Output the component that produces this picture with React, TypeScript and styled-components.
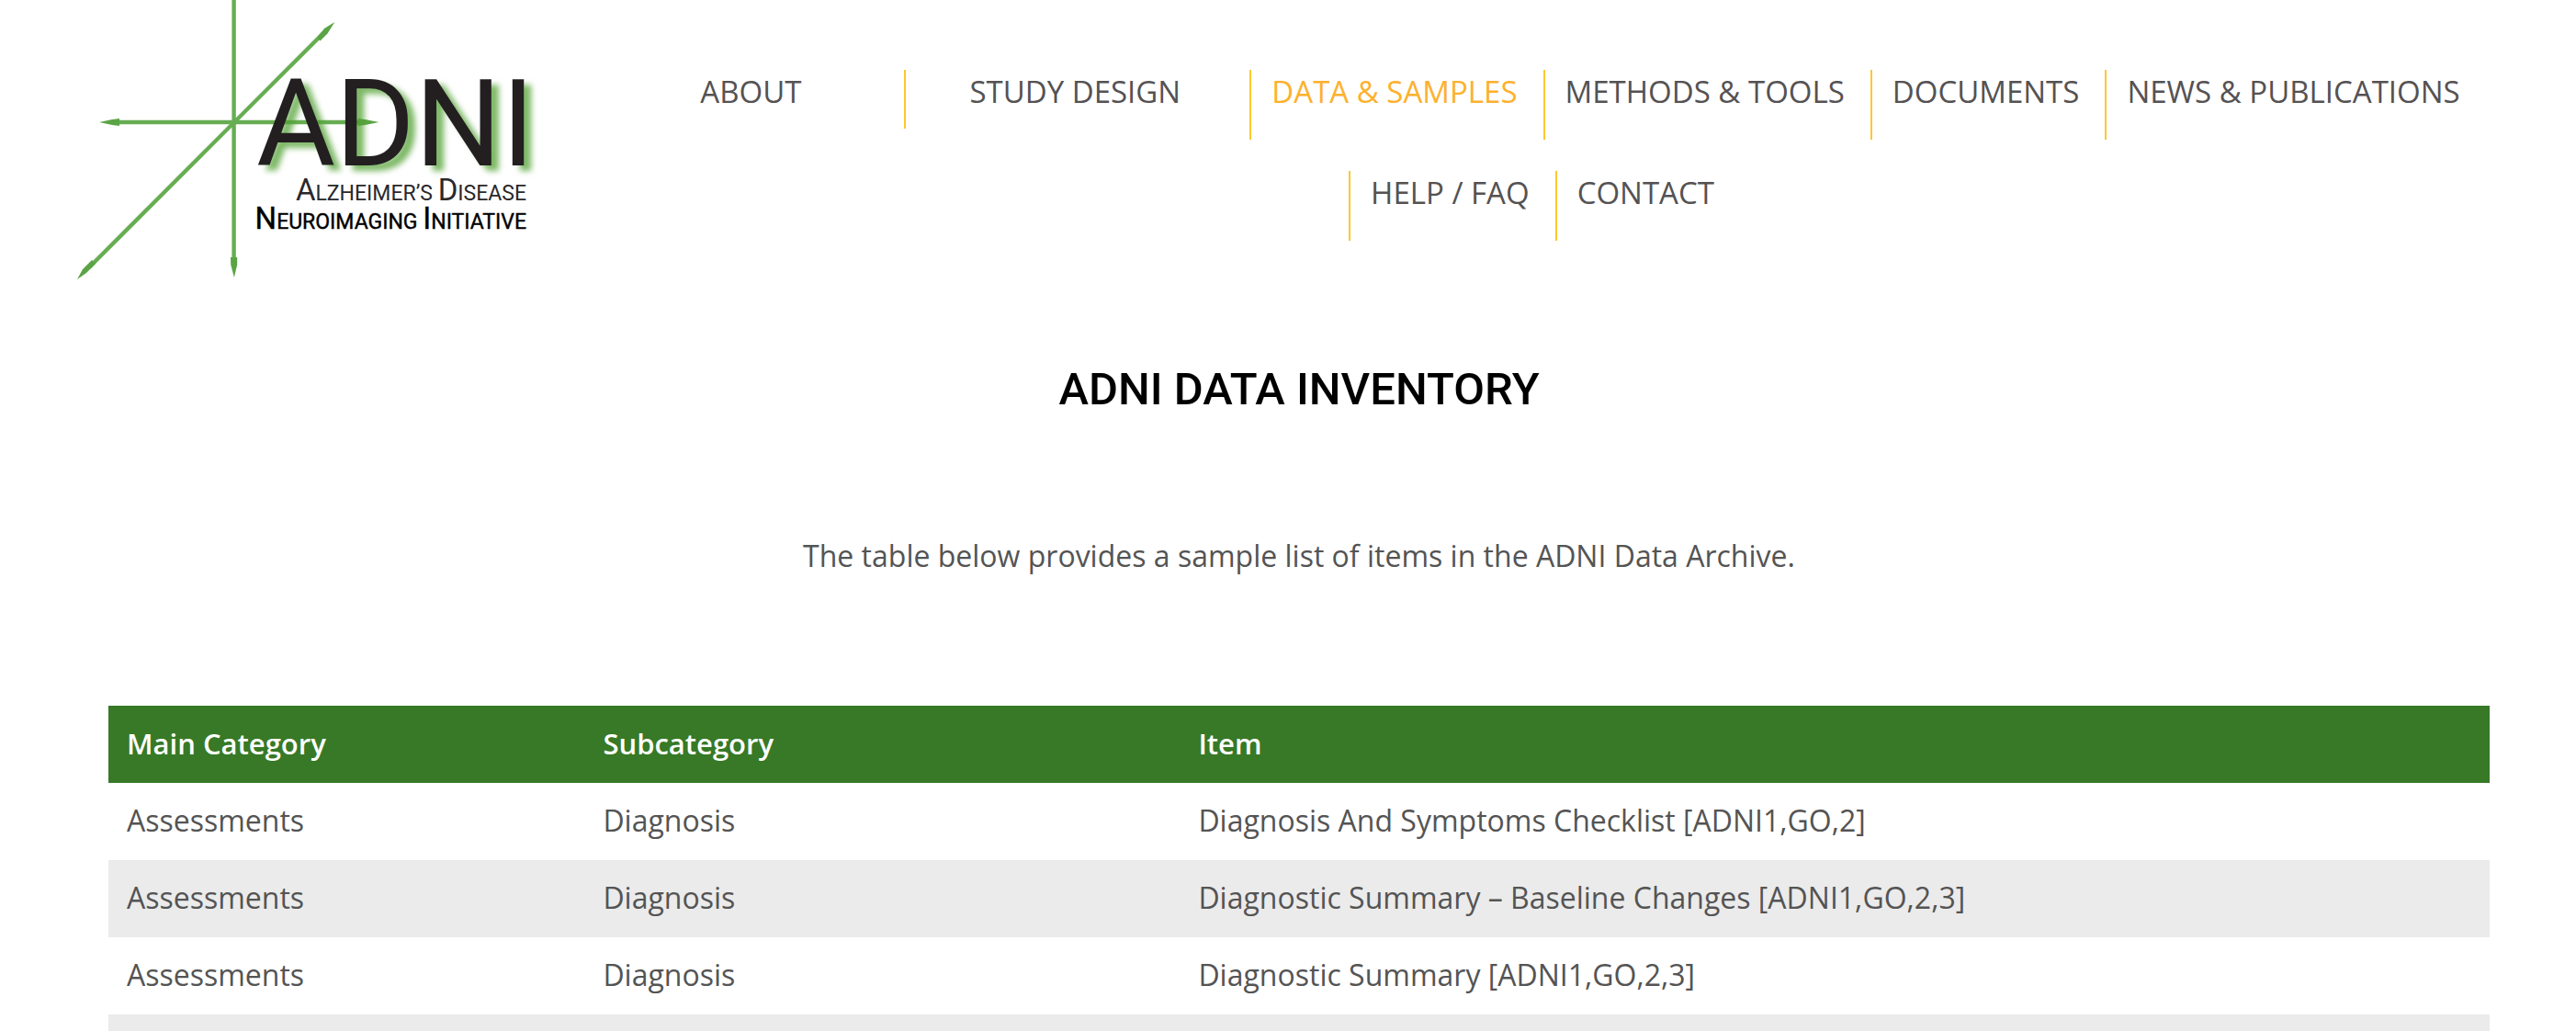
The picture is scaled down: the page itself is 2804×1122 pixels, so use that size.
import React from "react";
import styled, { createGlobalStyle, css } from "styled-components";

const GlobalStyle = createGlobalStyle`
  *, *::before, *::after { box-sizing: border-box; }
  body {
    margin: 0;
    background: #fff;
    color: #545454;
    font-family: "Open Sans", "Noto Sans", sans-serif;
    font-size: 32px;
    line-height: 48px;
  }
`;

const Header = styled.header`
  display: flex;
  align-items: flex-start;
  padding: 0 32px 0 80px;
`;

const LogoLink = styled.a`
  flex: none;
  display: block;
  width: 510px;
  svg { display: block; width: 100%; height: auto; }
`;

const Nav = styled.nav`
  flex: 1;
  min-width: 0;
  padding-top: 76px;
`;

const NavList = styled.ul`
  display: flex;
  flex-wrap: wrap;
  justify-content: center;
  align-items: flex-start;
  row-gap: 34px;
  margin: 0;
  padding: 0;
  list-style: none;
`;

const NavItem = styled.li<{ $divider: boolean; $short?: boolean; $minWidth?: number }>`
  padding: 0 28px ${(p) => (p.$short ? 16 : 28)}px 22px;
  text-align: center;
  ${(p) => p.$divider && css`border-left: 2px solid #fdc82f;`}
  ${(p) => p.$minWidth && css`min-width: ${p.$minWidth}px;`}
`;

const NavLink = styled.a<{ $active?: boolean }>`
  display: block;
  font-size: 33px;
  line-height: 48px;
  white-space: nowrap;
  text-decoration: none;
  color: ${(p) => (p.$active ? "#fdb12d" : "#555253")};
`;

const Main = styled.main`
  padding: 90px 94px 0 118px;
`;

const Title = styled.h1`
  margin: 0 0 127px;
  font-family: Roboto, sans-serif;
  font-size: 49px;
  font-weight: 500;
  line-height: 60px;
  text-align: center;
  color: #000;
`;

const Intro = styled.p`
  margin: 0 0 139px;
  text-align: center;
`;

const TableClip = styled.div`
  max-height: calc(100vh - 768px);
  overflow: hidden;
`;

const Table = styled.table`
  width: 100%;
  table-layout: fixed;
  border-collapse: collapse;
`;

const HeadCell = styled.th<{ $width: string }>`
  width: ${(p) => p.$width};
  padding: 17px 20px 19px;
  background: #377926;
  color: #fff;
  font-size: 31px;
  font-weight: 600;
  text-align: left;
`;

const Row = styled.tr`
  &:nth-child(even) { background: #ebebeb; }
`;

const Cell = styled.td`
  height: 84px;
  padding: 17px 20px 19px;
`;

type NavEntry = { label: string; divider: boolean; active?: boolean; short?: boolean; minWidth?: number };

const navEntries: NavEntry[] = [
  { label: "ABOUT", divider: false, minWidth: 328 },
  { label: "STUDY DESIGN", divider: true, short: true, minWidth: 376 },
  { label: "DATA & SAMPLES", divider: true, active: true },
  { label: "METHODS & TOOLS", divider: true },
  { label: "DOCUMENTS", divider: true },
  { label: "NEWS & PUBLICATIONS", divider: true },
  { label: "HELP / FAQ", divider: true },
  { label: "CONTACT", divider: true },
];

const columns = [
  { label: "Main Category", width: "20%" },
  { label: "Subcategory", width: "25%" },
  { label: "Item", width: "55%" },
];

const rows = [
  ["Assessments", "Diagnosis", "Diagnosis And Symptoms Checklist [ADNI1,GO,2]"],
  ["Assessments", "Diagnosis", "Diagnostic Summary – Baseline Changes [ADNI1,GO,2,3]"],
  ["Assessments", "Diagnosis", "Diagnostic Summary [ADNI1,GO,2,3]"],
  ["", "", ""],
];

const WordMark = styled.text`
  font-family: Roboto, sans-serif;
  font-size: 132px;
  font-weight: 400;
  fill: #231f20;
  filter: drop-shadow(8px 6px 3px rgba(80, 160, 50, 0.75));
`;

const Tagline = styled.text<{ $strong?: boolean }>`
  font-family: Roboto, sans-serif;
  font-size: 23px;
  fill: ${(p) => (p.$strong ? "#000" : "#2b282a")};
  stroke: ${(p) => (p.$strong ? "#000" : "none")};
  stroke-width: 0.4;
`;

const Cap = styled.tspan`
  font-size: 33px;
`;

function Logo() {
  return (
    <svg viewBox="0 0 510 304" role="img" aria-label="ADNI">
      <g stroke="#67ad53" strokeWidth="4.4" fill="none">
        <path d="M174.600 0V285" />
        <path d="M45 133H316" />
        <path d="M17 291L272 36" />
      </g>
      <g fill="#5ba446">
        <path d="M171 280h7.200v8L174.900 302l-3.700-14z" />
        <path d="M28 133L42 130l8-1v8l-8-1z" />
        <path d="M332.500 133l-15-3-8-1v8l8-1z" />
        <path d="M284.300 24L273 31l-8 10 3.500 3.500 8-8z" />
        <path d="M4 304L10 293l10-10 4 4-10 10z" />
      </g>
      <WordMark x="199" y="180">ADNI</WordMark>
      <Tagline x="493" y="218" textAnchor="end">
        <Cap>A</Cap>LZHEIMER’S <Cap>D</Cap>ISEASE
      </Tagline>
      <Tagline x="493" y="249" textAnchor="end" $strong>
        <Cap>N</Cap>EUROIMAGING <Cap>I</Cap>NITIATIVE
      </Tagline>
    </svg>
  );
}

export default function App() {
  return (
    <>
      <GlobalStyle />
      <Header>
        <LogoLink href="#" aria-label="ADNI home">
          <Logo />
        </LogoLink>
        <Nav>
          <NavList>
            {navEntries.map((entry) => (
              <NavItem key={entry.label} $divider={entry.divider} $short={entry.short} $minWidth={entry.minWidth}>
                <NavLink href="#" $active={entry.active}>{entry.label}</NavLink>
              </NavItem>
            ))}
          </NavList>
        </Nav>
      </Header>
      <Main>
        <Title>ADNI DATA INVENTORY</Title>
        <Intro>The table below provides a sample list of items in the ADNI Data Archive.</Intro>
        <TableClip>
          <Table>
            <thead>
              <tr>
                {columns.map((column) => (
                  <HeadCell key={column.label} $width={column.width} scope="col">{column.label}</HeadCell>
                ))}
              </tr>
            </thead>
            <tbody>
              {rows.map((row, rowIndex) => (
                <Row key={rowIndex}>
                  {row.map((value, cellIndex) => (
                    <Cell key={cellIndex}>{value}</Cell>
                  ))}
                </Row>
              ))}
            </tbody>
          </Table>
        </TableClip>
      </Main>
    </>
  );
}
